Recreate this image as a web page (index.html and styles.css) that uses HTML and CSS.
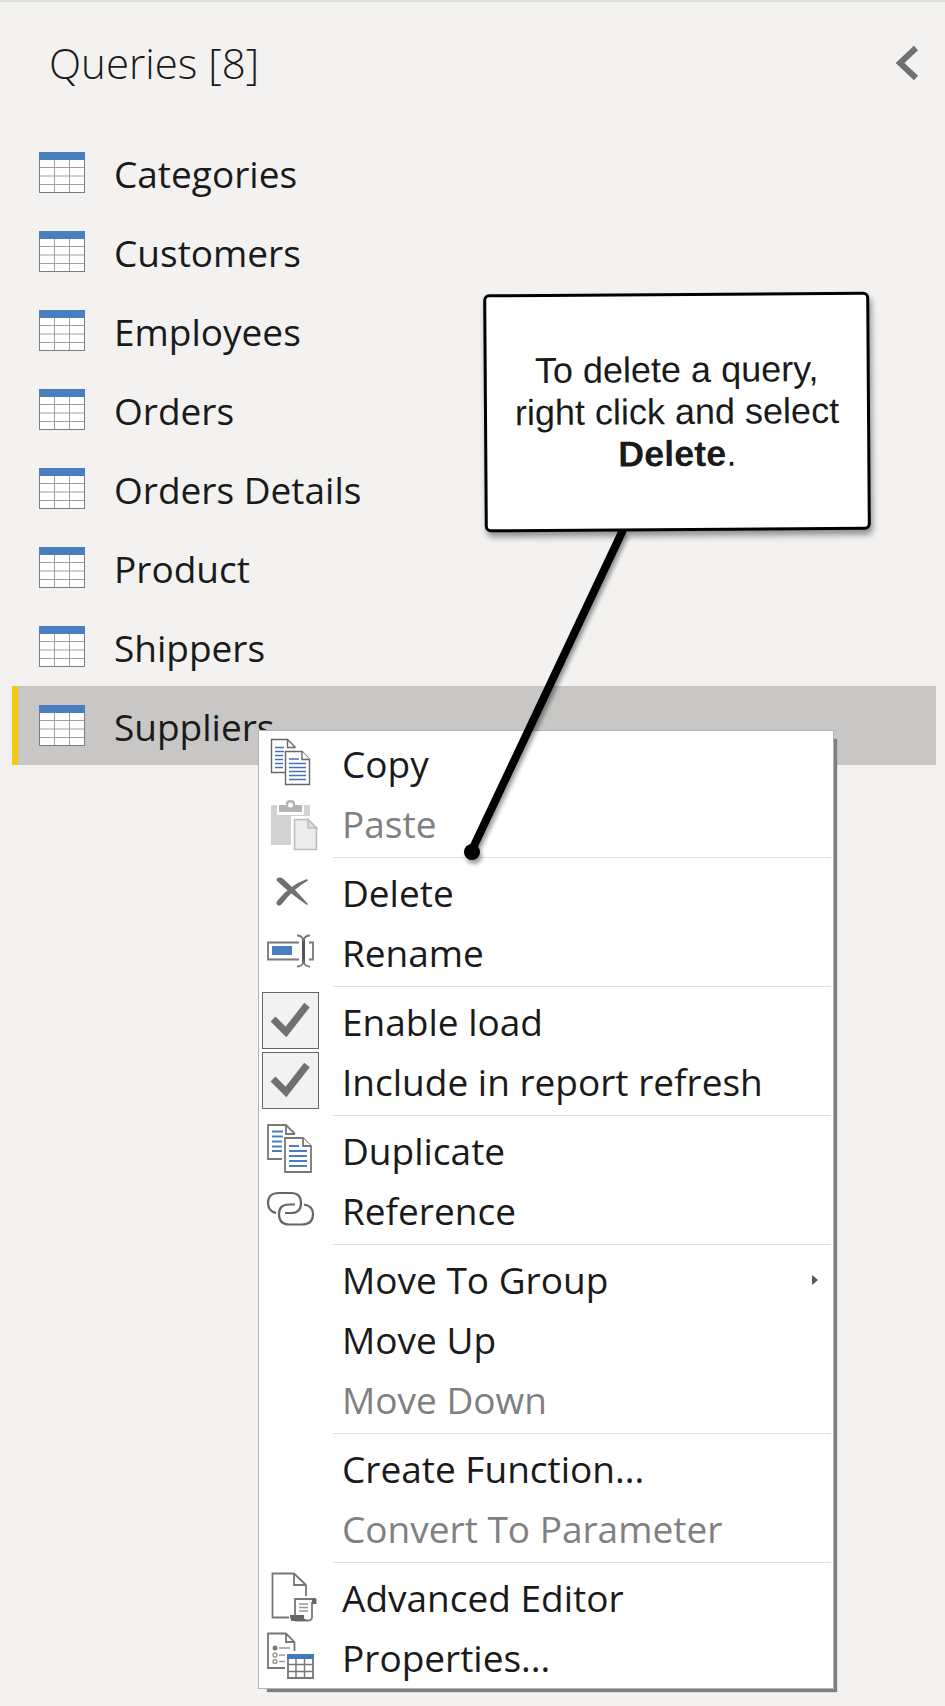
FILE: index.html
```html
<!DOCTYPE html>
<html lang="en">
<head>
<meta charset="utf-8">
<title>Queries</title>
<link rel="stylesheet" href="styles.css">
</head>
<body>
<svg class="defs" aria-hidden="true">
  <symbol id="i-table" viewBox="0 0 46 41">
    <rect x="0.5" y="0.5" width="45" height="40" fill="#fff" stroke="#7d7d7d"/>
    <path d="M1 15.5H45M1 24H45M1 32.5H45M15.5 8V40M30.5 8V40" stroke="#a0a0a0" fill="none"/>
    <rect width="46" height="8" fill="#4a7fbf"/>
  </symbol>
  <symbol id="i-copy" viewBox="0 0 60 60">
    <g fill="#fff" stroke="#666" stroke-width="1.4">
      <path d="M10.500 5.500H26.500L34 13.500V30H10.500Z" stroke="none"/>
      <path d="M24 38.500H10.500V5.500H26.500L34.500 13.500M26.500 5.500V13.500H34.500"/>
    </g>
    <path d="M14 13.500H23M14 17.500H23M14 21.500H22M14 25.500H22M14 29.500H22M14 33.500H22" stroke="#4472b8" stroke-width="1.6" fill="none"/>
    <g fill="#fff" stroke="#666" stroke-width="1.4">
      <path d="M24.500 17.500H41L48.500 25.500V50.500H24.500Z"/>
      <path d="M41 17.500V25.500H48.500"/>
    </g>
    <path d="M28 25H38M28 29.500H45M28 33.500H45M28 37.500H45M28 41.500H45M28 45.500H45" stroke="#4472b8" stroke-width="1.6" fill="none"/>
  </symbol>
  <symbol id="i-duplicate" viewBox="0 0 60 60">
    <g fill="#fff" stroke="#777" stroke-width="1.8">
      <path d="M21 38H7V4H25L34 13M25 4V13H34"/>
      <path d="M24 17H42L50 25V51H24Z"/>
      <path d="M42 17V25H50"/>
    </g>
    <path d="M11 10.500H22M11 15.500H22M11 20.500H21M11 25.500H21M11 30H21M28 25H38M28 30H46M28 35H46M28 40H46M28 45H46" stroke="#4a7fbf" stroke-width="1.8" fill="none"/>
  </symbol>
</svg>

<main class="panel">
  <header class="head">
    <h1 class="title">Queries [8]</h1>
    <button class="collapse" aria-label="Collapse queries pane">
      <svg width="24" height="38" viewBox="0 0 24 38"><path d="M21 4L5 19L21 34" fill="none" stroke="#707070" stroke-width="6"/></svg>
    </button>
  </header>
  <ul class="queries">
    <li><button class="query"><svg class="table-icon"><use href="#i-table"/></svg><span>Categories</span></button></li>
    <li><button class="query"><svg class="table-icon"><use href="#i-table"/></svg><span>Customers</span></button></li>
    <li><button class="query"><svg class="table-icon"><use href="#i-table"/></svg><span>Employees</span></button></li>
    <li><button class="query"><svg class="table-icon"><use href="#i-table"/></svg><span>Orders</span></button></li>
    <li><button class="query"><svg class="table-icon"><use href="#i-table"/></svg><span>Orders Details</span></button></li>
    <li><button class="query"><svg class="table-icon"><use href="#i-table"/></svg><span>Product</span></button></li>
    <li><button class="query"><svg class="table-icon"><use href="#i-table"/></svg><span>Shippers</span></button></li>
    <li class="anchor">
      <button class="query selected"><svg class="table-icon"><use href="#i-table"/></svg><span>Suppliers</span></button>
      <div class="menu">
        <button class="item"><svg class="icon"><use href="#i-copy"/></svg><span>Copy</span></button>
        <button class="item" disabled>
          <svg class="icon" viewBox="0 0 60 60">
            <path d="M10 11H49V51H10Z" fill="#d2d2d2"/>
            <path d="M16 9H43V21H16Z" fill="#fff"/>
            <path d="M18 11H25V9Q25 6 29.500 6Q34 6 34 9V11H41V18H18Z" fill="#b4b4b4"/>
            <circle cx="29.500" cy="11" r="2.500" fill="#fff"/>
            <path d="M30 22H60V60H30Z" fill="#fff"/>
            <path d="M33.500 25.500H47L55.500 34V55.500H33.500Z" fill="#ececec" stroke="#bdbdbd" stroke-width="1.600"/>
            <path d="M47 25.500V34H55.500Z" fill="#dedede" stroke="#bdbdbd" stroke-width="1.600"/>
          </svg><span>Paste</span></button>
        <hr>
        <button class="item">
          <svg class="icon" viewBox="0 0 60 60" fill="#707070">
            <path d="M16 18Q14.500 15 18 14.500Q21 14 23 16.500Q35 27 47 41L46 42Q31 32 16 18Z"/>
            <path d="M46 16L47 17.500Q32 26 20 42Q17 43.500 15.500 41Q15 39 17 37Q29 22 46 16Z"/>
          </svg><span>Delete</span></button>
        <button class="item">
          <svg class="icon" viewBox="0 0 60 60" fill="none" stroke="#777" stroke-width="1.800">
            <path d="M38 19.500H7V36.500H38M48 19.500H52V36.500H48"/>
            <path d="M11 23H31V32H11Z" fill="#4a7fbf" stroke="none"/>
            <path d="M42.500 16V40" stroke="#555" stroke-width="3"/>
            <path d="M36 12.500Q41 12.500 42.500 17Q44 12.500 49 12.500M36 43.500Q41 43.500 42.500 39Q44 43.500 49 43.500"/>
          </svg><span>Rename</span></button>
        <hr>
        <label class="item">
          <span class="check"><input type="checkbox" checked><svg viewBox="0 0 57 57"><path d="M11 27L24 40L45 13" fill="none" stroke="#707070" stroke-width="7"/></svg></span>
          <span>Enable load</span></label>
        <label class="item">
          <span class="check"><input type="checkbox" checked><svg viewBox="0 0 57 57"><path d="M11 27L24 40L45 13" fill="none" stroke="#707070" stroke-width="7"/></svg></span>
          <span>Include in report refresh</span></label>
        <hr>
        <button class="item"><svg class="icon"><use href="#i-duplicate"/></svg><span>Duplicate</span></button>
        <button class="item">
          <svg class="icon" viewBox="0 0 60 60" fill="none" stroke="#666" stroke-width="2.200">
            <path d="M15 32Q7 30 7 22Q7 12 18 12H30Q40 12 40 22Q40 32 30 32H24"/>
            <path d="M34 23.500H28Q18 23.500 18 33Q18 43.500 28 43.500H41Q52 43.500 52 33Q52 25 43 23.500"/>
          </svg><span>Reference</span></button>
        <hr>
        <button class="item"><span class="icon"></span><span>Move To Group</span>
          <svg class="arrow" width="6" height="10" viewBox="0 0 6 10"><path d="M0 0L6 5L0 10Z" fill="#555"/></svg></button>
        <button class="item"><span class="icon"></span><span>Move Up</span></button>
        <button class="item" disabled><span class="icon"></span><span>Move Down</span></button>
        <hr>
        <button class="item"><span class="icon"></span><span>Create Function...</span></button>
        <button class="item" disabled><span class="icon"></span><span>Convert To Parameter</span></button>
        <hr>
        <button class="item">
          <svg class="icon" viewBox="0 0 60 60" fill="none" stroke="#777" stroke-width="1.800">
            <path d="M28 49.500H11.500V5.500H33L45 17V28M33 5.500V17H45"/>
            <path d="M34 47V31H54V35H51V49Q51 52.500 47 52.500H34" fill="#fff"/>
            <path d="M51 31Q52 30 55.500 31V36H51Z" fill="#666" stroke="none"/>
            <path d="M29 47H43V50Q44 52 47 53H31Q29 52 29 47Z" fill="#666" stroke="none"/>
            <path d="M38 36H47M38 39.500H47M38 43H47" stroke="#999" stroke-width="1.400"/>
          </svg><span>Advanced Editor</span></button>
        <button class="item">
          <svg class="icon" viewBox="0 0 60 60" fill="none" stroke="#777" stroke-width="1.800">
            <path d="M24 40H7V5.500H25L33.500 14V23M25 5.500V14H33.500"/>
            <circle cx="14" cy="20" r="2.500" fill="#777" stroke="none"/>
            <g stroke="#999" stroke-width="1.400"><circle cx="14" cy="27" r="2"/><circle cx="14" cy="33.500" r="2"/>
            <path d="M18 20H29M18 27H24M18 33.500H24"/></g>
            <path d="M27 27H52V50H27Z" fill="#fff"/>
            <path d="M27 36.500H52M27 43.500H52M35 31V50M43.500 31V50" stroke-width="1.400"/>
            <path d="M26 26H53V31H26Z" fill="#3f78bb" stroke="none"/>
          </svg><span>Properties...</span></button>
      </div>
    </li>
  </ul>
</main>

<svg class="leader" width="180" height="340" viewBox="0 0 180 340" aria-hidden="true">
  <path d="M168 4L17 324" stroke="#000" stroke-width="8"/><circle cx="17" cy="326" r="8"/>
</svg>
<aside class="callout"><p>To delete a query,<br>right click and select<br><strong>Delete</strong>.</p></aside>
</body>
</html>
```
FILE: styles.css
```css
* { box-sizing: border-box; }
body {
  margin: 0;
  min-height: 100vh;
  position: relative;
  background: #f3f2f1;
  color: #1a1a1a;
  font-family: "Open Sans", "Noto Sans", sans-serif;
  font-size: 37px;
}
button {
  font: inherit;
  color: inherit;
  background: none;
  border: 0;
  padding: 0;
  text-align: left;
}
.defs { position: absolute; width: 0; height: 0; }
.panel { border-top: 2px solid #dededc; padding: 0 9px 0 12px; }
.head {
  display: flex;
  align-items: center;
  justify-content: space-between;
  height: 131px;
  padding: 0 17px 10px 37px;
}
.title { margin: 0; font-size: 42px; font-weight: 300; line-height: 60px; }
.collapse { display: flex; }
.queries { list-style: none; margin: 0; padding: 0; }
.query {
  display: flex;
  align-items: center;
  gap: 29px;
  width: 100%;
  height: 79px;
  padding-left: 21px;
  border-left: 6px solid transparent;
  line-height: 50px;
}
.query span { padding-top: 3px; }
.query.selected { background: #c8c7c6; border-left-color: #f2c811; }
.table-icon { width: 46px; height: 41px; }
.anchor { position: relative; }

.menu {
  position: absolute;
  top: 44px;
  left: 246px;
  width: 576px;
  padding: 3px 2px 0;
  background: #fff;
  border: 1px solid #b4b4b4;
  box-shadow: 6px 6px 1px -3px #808080;
}
.item {
  display: flex;
  align-items: center;
  gap: 21px;
  width: 100%;
  height: 60px;
  line-height: 50px;
}
.item:disabled { color: #808080; }
.icon { flex: none; width: 60px; height: 60px; }
.menu hr {
  height: 1px;
  margin: 3px 0 5px 72px;
  border: 0;
  background: #e0e0e0;
}
.arrow { margin-left: auto; margin-right: 13px; }
.check { flex: none; align-self: flex-start; display: grid; width: 60px; padding-left: 1px; }
.check input, .check svg { grid-area: 1 / 1; width: 57px; height: 57px; margin: 0; }
.check input { appearance: none; background: #f3f2f2; border: 1px solid #666; }
.check svg { pointer-events: none; }

.leader {
  position: absolute;
  left: 455px;
  top: 526px;
  filter: drop-shadow(2px 4px 2px rgba(0, 0, 0, 0.4));
}
.callout {
  position: absolute;
  left: 484px;
  top: 293px;
  width: 386px;
  height: 238px;
  display: flex;
  align-items: center;
  justify-content: center;
  background: #fff;
  border: 3px solid #000;
  border-radius: 6px;
  box-shadow: 2px 5px 6px rgba(0, 0, 0, 0.4);
  transform: rotate(-0.4deg);
  font-family: "Liberation Sans", Arial, sans-serif;
  font-size: 36px;
  line-height: 42px;
  text-align: center;
}
.callout p { margin: 0; }
```
